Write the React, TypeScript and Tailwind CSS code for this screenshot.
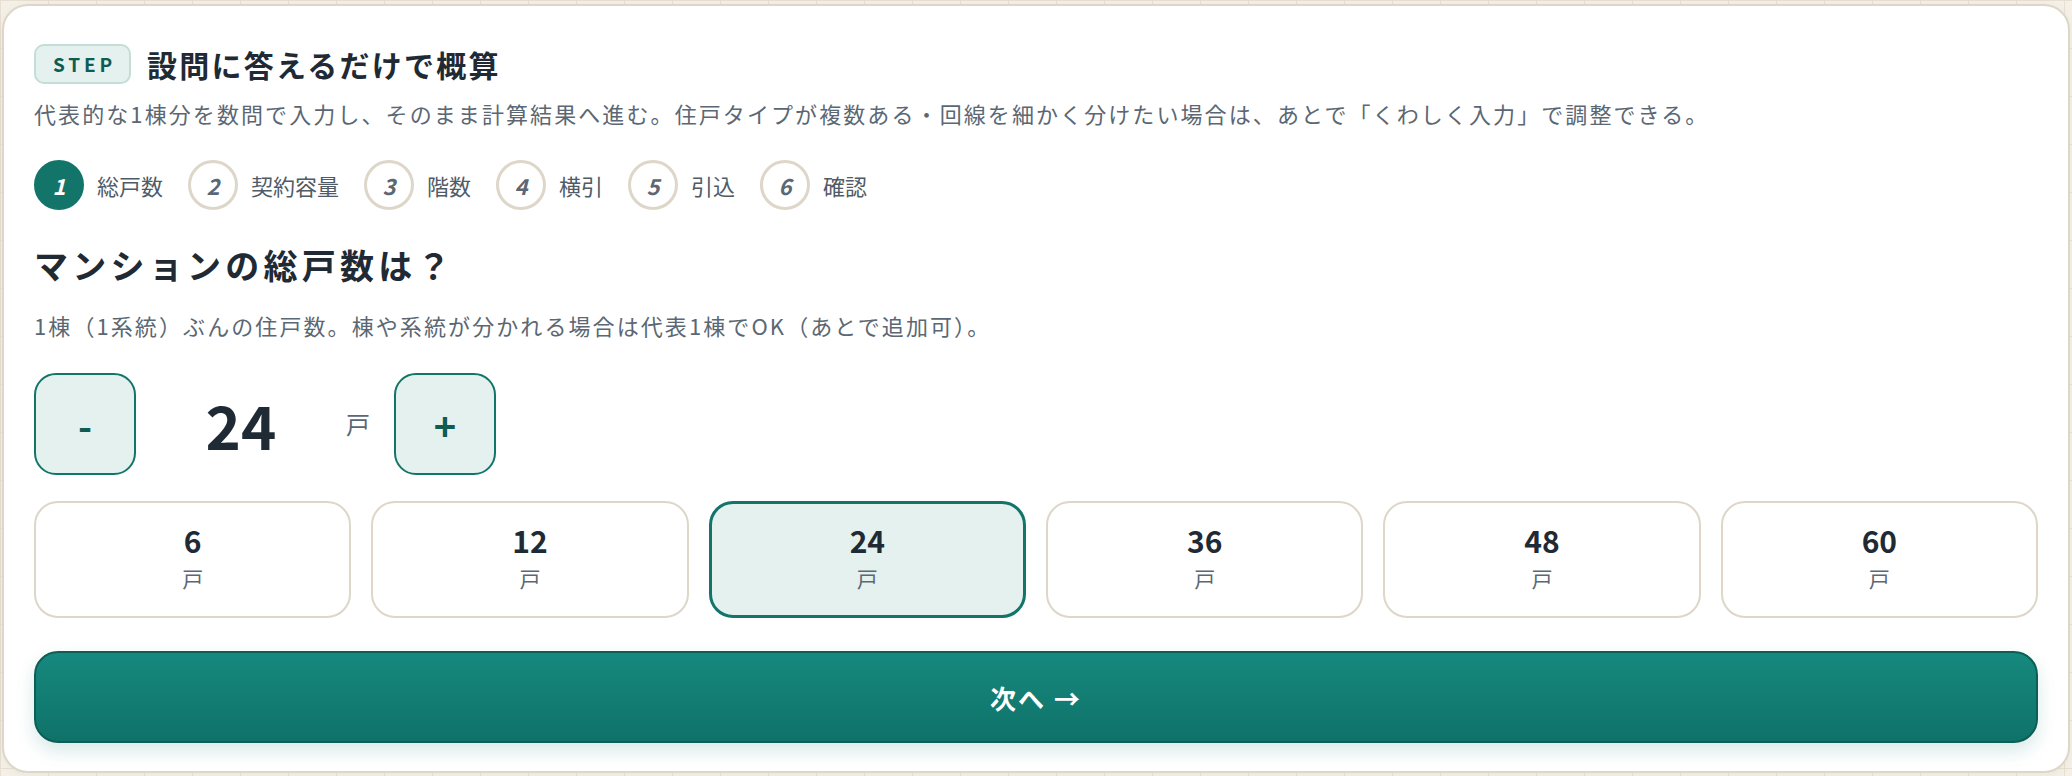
import { useState } from "react";

const steps = [
  { n: 1, label: "総戸数" },
  { n: 2, label: "契約容量" },
  { n: 3, label: "階数" },
  { n: 4, label: "横引" },
  { n: 5, label: "引込" },
  { n: 6, label: "確認" },
];

const presets = [6, 12, 24, 36, 48, 60];

export default function App() {
  const [count, setCount] = useState(24);

  return (
    <div className="min-h-screen bg-[#f4f0e7] bg-[linear-gradient(to_right,#e6dfd2_1px,transparent_1px),linear-gradient(to_bottom,#e6dfd2_1px,transparent_1px)] bg-[size:48px_48px] pt-[4px] font-['Noto_Sans_CJK_JP','Noto_Sans',sans-serif]">
      <div className="mx-[2px] rounded-[26px] border-2 border-[#ddd6c9] bg-white px-[30px] pt-[38px] pb-[28px] shadow-[0_2px_8px_rgba(120,100,60,0.06)]">
        {/* Header */}
        <div className="flex items-center gap-4">
          <span className="flex h-[40px] w-[97px] items-center justify-center rounded-[10px] border-2 border-[#c3ddd7] bg-[#e4f1ee] pl-[4px] text-[19px] font-bold tracking-[0.2em] text-[#0f5c52]">
            STEP
          </span>
          <h1 className="text-[30px] font-bold leading-none tracking-[0.075em] text-[#1f2a35]">設問に答えるだけで概算</h1>
        </div>
        <p className="mt-[12px] text-[22px] leading-[34px] tracking-[0.095em] text-[#5b6773]">
          代表的な1棟分を数問で入力し、そのまま計算結果へ進む。住戸タイプが複数ある・回線を細かく分けたい場合は、あとで「くわしく入力」で調整できる。
        </p>

        {/* Steps */}
        <div className="mt-[30px] flex items-center gap-[25px]">
          {steps.map((s) => (
            <div key={s.n} className="flex items-center gap-[13px]">
              <span
                className={
                  s.n === 1
                    ? "flex h-[50px] w-[50px] items-center justify-center rounded-full border-[3px] border-[#13756a] bg-[#13756a] text-[22px] font-bold italic text-white"
                    : "flex h-[50px] w-[50px] items-center justify-center rounded-full border-[3px] border-[#ddd6c9] bg-white text-[22px] font-bold italic text-[#5b6773]"
                }
              >
                {s.n}
              </span>
              <span className="text-[22px] text-[#4f5b67]">{s.label}</span>
            </div>
          ))}
        </div>

        {/* Question */}
        <h2 className="mt-[33px] text-[34px] font-bold leading-[44px] tracking-[0.125em] text-[#1f2a35]">マンションの総戸数は？</h2>
        <p className="mt-[21px] text-[22px] leading-[34px] tracking-[0.095em] text-[#5b6773]">
          1棟（1系統）ぶんの住戸数。棟や系統が分かれる場合は代表1棟でOK（あとで追加可）。
        </p>

        {/* Stepper */}
        <div className="mt-[31px] flex items-center gap-4">
          <button
            onClick={() => setCount((c) => Math.max(1, c - 1))}
            className="flex h-[102px] w-[102px] items-center justify-center rounded-[22px] border-2 border-[#13756a] bg-[#e4f1ee] text-[38px] font-bold text-[#0f5c52]"
          >
            -
          </button>
          <span className="w-[178px] text-center text-[60px] font-bold leading-none text-[#1f2a35]">{count}</span>
          <span className="mr-[8px] text-[24px] text-[#5b6773]">戸</span>
          <button
            onClick={() => setCount((c) => c + 1)}
            className="flex h-[102px] w-[102px] items-center justify-center rounded-[22px] border-2 border-[#13756a] bg-[#e4f1ee] text-[38px] font-bold text-[#0f5c52]"
          >
            +
          </button>
        </div>

        {/* Presets */}
        <div className="mt-[26px] grid grid-cols-6 gap-5">
          {presets.map((p) => (
            <button
              key={p}
              onClick={() => setCount(p)}
              className={
                p === count
                  ? "flex h-[117px] flex-col items-center justify-center gap-[5px] rounded-[24px] border-[3px] border-[#13756a] bg-[#e4f1ee] pb-[5px]"
                  : "flex h-[117px] flex-col items-center justify-center gap-[5px] rounded-[24px] border-2 border-[#ddd6c9] bg-white pb-[5px]"
              }
            >
              <span className="text-[30px] font-bold leading-[36px] text-[#1f2a35]">{p}</span>
              <span className="text-[21px] leading-[30px] text-[#5b6773]">戸</span>
            </button>
          ))}
        </div>

        {/* Next */}
        <button className="mt-[33px] flex h-[92px] w-full items-center justify-center rounded-[24px] border-2 border-[#0c5e56] bg-gradient-to-b from-[#16897e] to-[#0f7269] text-[26px] font-bold tracking-[0.08em] text-white shadow-[0_8px_18px_rgba(15,118,110,0.16)]">
          次へ →
        </button>
      </div>
    </div>
  );
}
